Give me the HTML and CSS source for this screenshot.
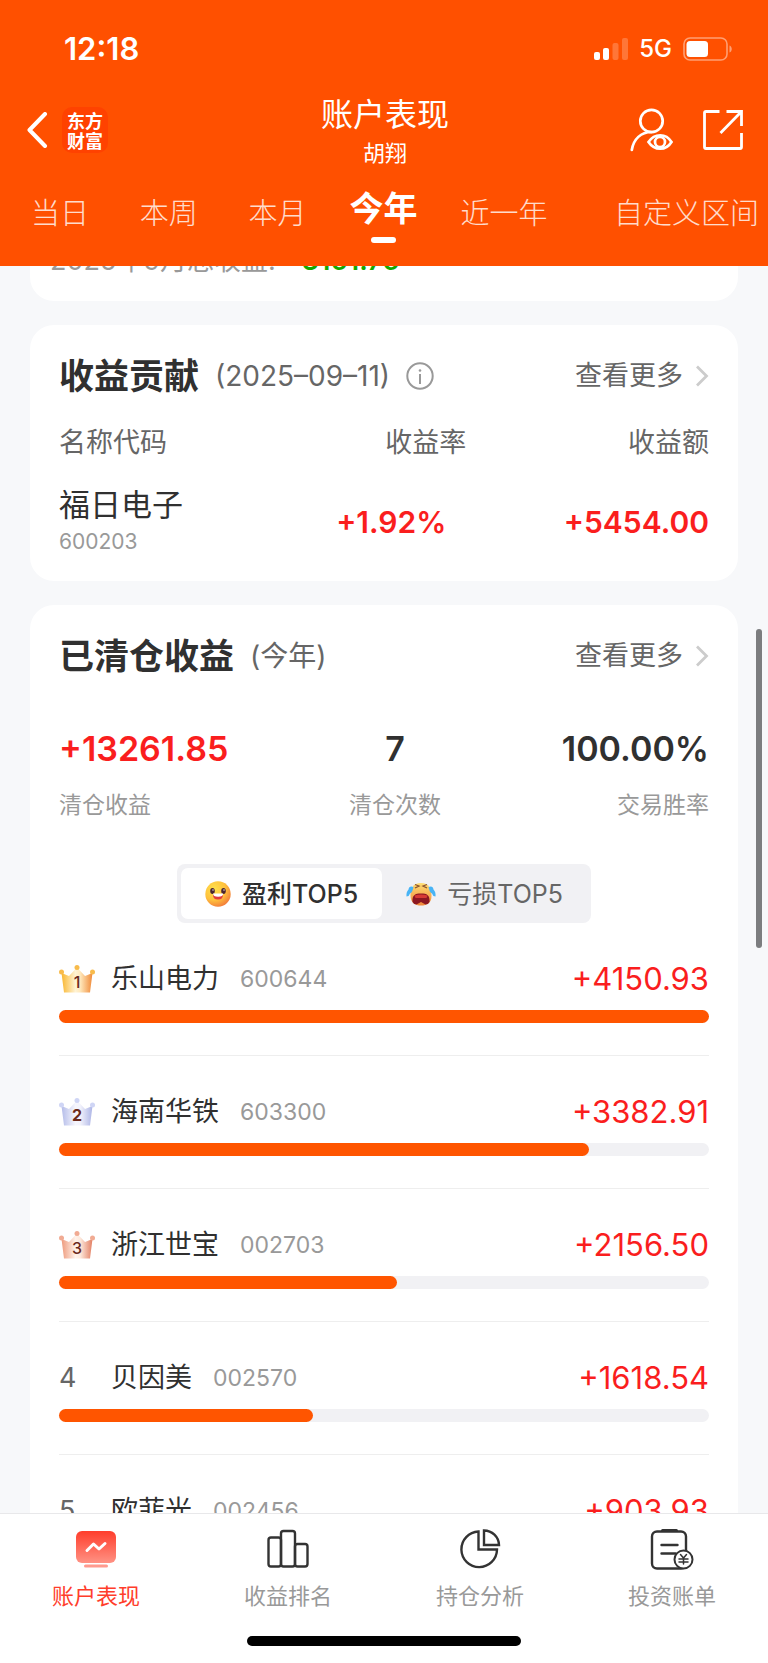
FILE: index.html
```html
<!DOCTYPE html>
<html lang="zh-CN">

<head>
  <meta charset="UTF-8" />
  <meta name="viewport" content="width=device-width, initial-scale=1" />
  <title>账户表现</title>
  <link rel="stylesheet" href="styles.css">
</head>

<body>
  <header class="app-header">
    <div class="status-bar">
      <span class="status-time">12:18</span>
      <div class="status-icons">
        <svg width="34" height="23" viewBox="0 0 34 23" fill="#fff" aria-hidden="true">
          <rect x="0" y="14" width="6" height="8" rx="2" />
          <rect x="9" y="10" width="6" height="12" rx="2" />
          <rect x="18.500" y="5" width="6" height="17" rx="2" opacity=".22" />
          <rect x="28" y="0" width="6" height="22" rx="2" opacity=".22" />
        </svg>
        <span class="status-net">5G</span>
        <svg width="50" height="24" viewBox="0 0 50 24" fill="none" aria-hidden="true">
          <rect x="1" y="1" width="43" height="22" rx="6" stroke="#fff" stroke-opacity=".45" stroke-width="1.600" />
          <rect x="3.500" y="4" width="21.500" height="16" rx="3.500" fill="#fff" />
          <path d="M46.500 8.500c3 1 3 6 0 7z" fill="#fff" fill-opacity=".45" />
        </svg>
      </div>
    </div>

    <div class="title-bar">
      <div class="bar-end">
        <button type="button" class="icon-button" aria-label="返回">
          <svg width="22" height="36" viewBox="0 0 22 36" fill="none" stroke="#fff" stroke-width="4">
            <path d="M19 2 3.500 18 19 34" stroke-linejoin="round" stroke-linecap="round" />
          </svg>
        </button>
        <span class="logo">东方<br>财富</span>
      </div>
      <div class="title-group">
        <h1>账户表现</h1>
        <p class="account-name">胡翔</p>
      </div>
      <div class="bar-end bar-end-right">
        <button type="button" class="icon-button" aria-label="查看账户">
          <svg width="44" height="44" viewBox="0 0 44 44" fill="none" stroke="#fff" stroke-width="2.700">
            <circle cx="22.500" cy="13" r="11.200" />
            <path d="M2.800 42C4.500 31 12 24 22.500 24" stroke-linecap="round" />
            <path d="M19.500 34c6-9 17.500-9 23 0-5.500 9-17 9-23 0z" fill="#ff5000" />
            <circle cx="31" cy="34" r="5" />
          </svg>
        </button>
        <button type="button" class="icon-button" aria-label="分享">
          <svg width="42" height="42" viewBox="0 0 42 42" fill="none" stroke="#fff" stroke-width="2.800">
            <path d="M17.500 2.500H4Q2.500 2.500 2.500 4v34Q2.500 39.500 4 39.500h34Q39.500 39.500 39.500 38V24" />
            <path d="M24.500 2.500h15V17M39 3 18.500 24" />
          </svg>
        </button>
      </div>
    </div>

    <nav class="period-tabs" aria-label="时间区间">
      <div class="tab-group">
        <button type="button" class="tab">当日</button>
        <button type="button" class="tab">本周</button>
        <button type="button" class="tab">本月</button>
      </div>
      <button type="button" class="tab tab-active">今年</button>
      <div class="tab-group">
        <button type="button" class="tab">近一年</button>
        <button type="button" class="tab">自定义区间</button>
      </div>
    </nav>
  </header>

  <main class="content">
    <section class="card card-summary">
      <span class="summary-label">2025年9月总收益:</span>
      <span class="summary-value">-3161.76</span>
    </section>

    <section class="card card-contribution">
      <div class="card-head">
        <h2>收益贡献</h2>
        <span class="card-note">(2025–09–11)</span>
        <button type="button" class="icon-button" aria-label="说明">
          <svg width="28" height="28" viewBox="0 0 28 28" fill="none" stroke="#999" stroke-width="2">
            <circle cx="14" cy="14" r="12.700" />
            <path d="M14 12v10" />
            <circle cx="14" cy="8.500" r="1.300" fill="#999" stroke="none" />
          </svg>
        </button>
        <a href="#" class="more-link">查看更多
          <svg width="14" height="22" viewBox="0 0 14 22" fill="none" stroke="#ccc" stroke-width="2.800">
            <path d="M2 1.500 11.500 11 2 20.500" />
          </svg>
        </a>
      </div>
      <table class="contribution-table">
        <thead>
          <tr>
            <th>名称代码</th>
            <th>收益率</th>
            <th>收益额</th>
          </tr>
        </thead>
        <tbody>
          <tr>
            <td><span class="stock-name">福日电子</span><span class="stock-code">600203</span></td>
            <td>+1.92%</td>
            <td>+5454.00</td>
          </tr>
        </tbody>
      </table>
    </section>

    <section class="card card-closed">
      <div class="card-head">
        <h2>已清仓收益</h2>
        <span class="card-note">(今年)</span>
        <a href="#" class="more-link">查看更多
          <svg width="14" height="22" viewBox="0 0 14 22" fill="none" stroke="#ccc" stroke-width="2.800">
            <path d="M2 1.500 11.500 11 2 20.500" />
          </svg>
        </a>
      </div>

      <div class="stats">
        <div class="stat">
          <strong class="stat-value up">+13261.85</strong>
          <span class="stat-label">清仓收益</span>
        </div>
        <div class="stat stat-center">
          <strong class="stat-value">7</strong>
          <span class="stat-label">清仓次数</span>
        </div>
        <div class="stat stat-right">
          <strong class="stat-value">100.00%</strong>
          <span class="stat-label">交易胜率</span>
        </div>
      </div>

      <div class="toggle">
        <button type="button" class="toggle-option toggle-active">
          <svg width="26" height="26" viewBox="0 0 26 26" aria-hidden="true">
            <defs>
              <radialGradient id="smile" cx=".35" cy=".3" r=".8">
                <stop offset="0" stop-color="#ffe04a" />
                <stop offset=".55" stop-color="#ffc13c" />
                <stop offset="1" stop-color="#f0703a" />
              </radialGradient>
            </defs>
            <circle cx="13" cy="13" r="12.700" fill="url(#smile)" />
            <ellipse cx="7.500" cy="10" rx="2.300" ry="2.900" fill="#4a2530" />
            <ellipse cx="18.500" cy="10" rx="2.300" ry="2.900" fill="#4a2530" />
            <circle cx="8" cy="9" r=".7" fill="#fff" />
            <circle cx="19" cy="9" r=".7" fill="#fff" />
            <path d="M8 13h10q.5 5.500-5 5.500T8 13z" fill="#e23b3b" />
            <path d="M8 12.500h10.200q0 3.300-5.100 3.300T8 12.500z" fill="#fff" />
          </svg>
          盈利TOP5
        </button>
        <button type="button" class="toggle-option">
          <svg width="30" height="26" viewBox="0 0 30 26" aria-hidden="true">
            <defs>
              <linearGradient id="cry" x1="0" y1="0" x2="0" y2="1">
                <stop offset="0" stop-color="#ffdf72" />
                <stop offset="1" stop-color="#f0873a" />
              </linearGradient>
            </defs>
            <path d="M15 2C7 2 4 8 4.500 15S9 24.500 15 24.500 25.500 22 25.500 15 23 2 15 2z" fill="url(#cry)" />
            <path d="M9 3.500l4 1.500-4 2M21 3.500 17 5l4 2" fill="none" stroke="#8a5230" stroke-width="1.300" />
            <path d="M6.500 21C6 14 9 12.500 15 12.500s9 1.500 8.500 8.500q-1.500 2.500-4 2.500L15 21l-4.500 2.500Q8 23.500 6.500 21z" fill="#8c1822" />
            <path d="M8.500 14.500q6.500-2 13 0l-1 2.500h-11z" fill="#d63a35" />
            <path d="M7.500 6Q3 4.500 2.500 8.500 0 11 .5 15.500q3-.5 3.500-3 2.500-1 3.500-6.500zM22.500 6q4.500-1.500 5 2.500 2.500 2.500 2 7-3-.5-3.500-3-2.500-1-3.500-6.500z" fill="#48b4f5" />
          </svg>
          亏损TOP5
        </button>
      </div>

      <ol class="rank-list">
        <li class="rank-item">
          <div class="rank-row">
            <svg class="crown" viewBox="0 0 36 28">
              <defs>
                <linearGradient id="gold">
                  <stop offset="0" stop-color="#f9b62f" />
                  <stop offset=".45" stop-color="#fff3d4" />
                  <stop offset=".6" stop-color="#ffe9bd" />
                  <stop offset="1" stop-color="#f08a38" />
                </linearGradient>
              </defs>
              <path d="M2.500 8 10 11 18 2.500 26 11 33.500 8 31 27.500H5z" fill="url(#gold)" />
              <g fill="#f8bb4c">
                <circle cx="2.500" cy="7" r="2.500" />
                <circle cx="18" cy="2.500" r="2.500" />
                <circle cx="33.500" cy="7" r="2.500" />
              </g>
              <text x="18" y="23" text-anchor="middle">1</text>
            </svg>
            <span class="rank-name">乐山电力</span>
            <span class="rank-code">600644</span>
            <span class="rank-amount">+4150.93</span>
          </div>
          <div class="bar"><div class="bar-fill" style="width: 100%"></div></div>
        </li>
        <li class="rank-item">
          <div class="rank-row">
            <svg class="crown" viewBox="0 0 36 28">
              <defs>
                <linearGradient id="silver">
                  <stop offset="0" stop-color="#b4bce9" />
                  <stop offset=".45" stop-color="#f6f6fd" />
                  <stop offset=".6" stop-color="#f3f3fc" />
                  <stop offset="1" stop-color="#adb5e6" />
                </linearGradient>
              </defs>
              <path d="M2.500 8 10 11 18 2.500 26 11 33.500 8 31 27.500H5z" fill="url(#silver)" />
              <g fill="#cfd5f5">
                <circle cx="2.500" cy="7" r="2.500" />
                <circle cx="18" cy="2.500" r="2.500" />
                <circle cx="33.500" cy="7" r="2.500" />
              </g>
              <text class="crown-bold" x="18" y="23" text-anchor="middle">2</text>
            </svg>
            <span class="rank-name">海南华铁</span>
            <span class="rank-code">603300</span>
            <span class="rank-amount">+3382.91</span>
          </div>
          <div class="bar"><div class="bar-fill" style="width: 81.6%"></div></div>
        </li>
        <li class="rank-item">
          <div class="rank-row">
            <svg class="crown" viewBox="0 0 36 28">
              <defs>
                <linearGradient id="bronze">
                  <stop offset="0" stop-color="#ee9a7c" />
                  <stop offset=".45" stop-color="#fff2ea" />
                  <stop offset=".6" stop-color="#fdeade" />
                  <stop offset="1" stop-color="#e37f63" />
                </linearGradient>
              </defs>
              <path d="M2.500 8 10 11 18 2.500 26 11 33.500 8 31 27.500H5z" fill="url(#bronze)" />
              <g fill="#f1ab93">
                <circle cx="2.500" cy="7" r="2.500" />
                <circle cx="18" cy="2.500" r="2.500" />
                <circle cx="33.500" cy="7" r="2.500" />
              </g>
              <text x="18" y="23" text-anchor="middle">3</text>
            </svg>
            <span class="rank-name">浙江世宝</span>
            <span class="rank-code">002703</span>
            <span class="rank-amount">+2156.50</span>
          </div>
          <div class="bar"><div class="bar-fill" style="width: 52%"></div></div>
        </li>
        <li class="rank-item">
          <div class="rank-row">
            <span class="rank-number">4</span>
            <span class="rank-name">贝因美</span>
            <span class="rank-code">002570</span>
            <span class="rank-amount">+1618.54</span>
          </div>
          <div class="bar"><div class="bar-fill" style="width: 39%"></div></div>
        </li>
        <li class="rank-item">
          <div class="rank-row">
            <span class="rank-number">5</span>
            <span class="rank-name">欧菲光</span>
            <span class="rank-code">002456</span>
            <span class="rank-amount">+903.93</span>
          </div>
          <div class="bar"><div class="bar-fill" style="width: 21.8%"></div></div>
        </li>
      </ol>
    </section>

    <div class="scroll-thumb"></div>
  </main>

  <footer class="app-footer">
    <nav class="bottom-nav" aria-label="主导航">
      <a href="#" class="nav-item nav-active">
        <svg width="44" height="44" viewBox="0 0 44 44" fill="none">
          <defs>
            <linearGradient id="screen" x1="0" y1="0" x2="0" y2="1">
              <stop offset="0" stop-color="#ff3d2b" />
              <stop offset="1" stop-color="#ff9284" />
            </linearGradient>
          </defs>
          <rect x="2" y="3" width="40" height="32" rx="6" fill="url(#screen)" />
          <path d="M13 22.500 19.500 16l5.500 5 6-5.500" stroke="#fff" stroke-width="3" stroke-linecap="round" stroke-linejoin="round" />
          <path d="M11.500 38h21" stroke="#ff9a8e" stroke-width="3" stroke-linecap="round" />
        </svg>
        账户表现
      </a>
      <a href="#" class="nav-item">
        <svg width="44" height="44" viewBox="0 0 44 44" fill="none" stroke="#333" stroke-width="2.400">
          <rect x="2.500" y="9.500" width="12.500" height="29" rx="2.500" />
          <rect x="15" y="3" width="14" height="35.500" rx="2.500" />
          <rect x="29" y="16" width="12.500" height="22.500" rx="2.500" />
        </svg>
        收益排名
      </a>
      <a href="#" class="nav-item">
        <svg width="44" height="44" viewBox="0 0 44 44" fill="none" stroke="#333" stroke-width="2.400">
          <path d="M20.500 3.500A17.800 17.800 0 1 0 39 21.500H20.500z" />
          <path d="M26 2.500A15 15 0 0 1 41 17H26z" />
        </svg>
        持仓分析
      </a>
      <a href="#" class="nav-item">
        <svg width="44" height="44" viewBox="0 0 44 44" fill="none" stroke="#333" stroke-width="2.400" stroke-linecap="round">
          <rect x="2" y="3.500" width="34" height="37" rx="5" />
          <path d="M12.500 2.500h14" stroke-width="3" />
          <path d="M11.500 17h16M11.500 25.500h14" />
          <circle cx="33.500" cy="31.500" r="9" fill="#fff" stroke-width="2" />
          <path d="M30.500 26.500l3 3.500 3-3.500M33.500 30v6M29 31h9M29 34h9" stroke-width="1.500" />
        </svg>
        投资账单
      </a>
    </nav>
    <div class="home-indicator"></div>
  </footer>
</body>

</html>
```
FILE: styles.css
```css
:root {
  --color-brand: #ff5000;
  --color-bar: #ff5500;
  --color-up: #fa1e1e;
  --color-down: #14a800;
  --color-text: #303030;
  --color-text-secondary: #666;
  --color-text-muted: #999;
  --color-bg: #f7f8fa;
  --color-track: #f1f1f4;
  --font-family: Inter, 'Noto Sans CJK SC', sans-serif;
}

*,
*::before,
*::after {
  box-sizing: border-box;
}

body {
  margin: 0;
  height: 100vh;
  display: flex;
  flex-direction: column;
  overflow: hidden;
  background: var(--color-bg);
  color: var(--color-text);
  font-family: var(--font-family);
  font-size: 27px;
  line-height: 40px;
}

h1,
h2,
p {
  margin: 0;
}

button {
  border: none;
  background: none;
  padding: 0;
  color: inherit;
  font: inherit;
  cursor: pointer;
}

a {
  color: inherit;
  text-decoration: none;
}

svg {
  display: block;
  flex: none;
}

/* Header */
.app-header {
  flex: none;
  background: var(--color-brand);
  color: #fff;
}

.status-bar {
  display: flex;
  align-items: center;
  justify-content: space-between;
  height: 92px;
  padding: 6px 35px 0 64px;
}

.status-time {
  font-size: 31px;
  font-weight: 600;
}

.status-icons {
  display: flex;
  align-items: center;
  gap: 11px;
}

.status-net {
  font-size: 24px;
  font-weight: 500;
}

.title-bar {
  display: grid;
  grid-template-columns: minmax(0, 1fr) auto minmax(0, 1fr);
  align-items: center;
  padding: 0 24px 0 26px;
}

.bar-end {
  display: flex;
  align-items: center;
  gap: 14px;
}

.bar-end-right {
  justify-content: flex-end;
  gap: 29px;
}

.logo {
  padding: 3px 5px;
  border-radius: 10px;
  background: #ff4200;
  font-family: 'Noto Sans CJK SC', sans-serif;
  font-size: 18px;
  font-weight: 700;
  line-height: 20px;
}

.title-group {
  text-align: center;
}

h1 {
  font-size: 32px;
  font-weight: 400;
  line-height: 46px;
}

.account-name {
  font-size: 22px;
  line-height: 30px;
}

.period-tabs {
  display: grid;
  grid-template-columns: minmax(0, 12fr) auto minmax(0, 13fr);
  align-items: end;
  column-gap: 43px;
  height: 98px;
  padding: 0 9px 23px 31px;
}

.tab-group {
  display: flex;
  justify-content: space-between;
  padding-bottom: 9px;
}

.tab {
  font-size: 29px;
  font-weight: 300;
  white-space: nowrap;
  opacity: .8;
}

.tab-active {
  display: flex;
  flex-direction: column;
  align-items: center;
  gap: 8px;
  font-size: 34px;
  font-weight: 700;
  opacity: 1;
}

.tab-active::after {
  content: "";
  width: 25px;
  height: 6px;
  border-radius: 3px;
  background: #fff;
}

/* Cards */
.content {
  position: relative;
  flex: 1;
  min-height: 0;
  display: flex;
  flex-direction: column;
  gap: 24px;
  padding: 0 30px;
  overflow: hidden;
}

.card {
  flex: none;
  padding: 31px 29px 24px;
  border-radius: 24px;
  background: #fff;
}

/* The first card sits partly scrolled under the header */
.card-summary {
  margin-top: -25px;
  padding: 0 20px;
  padding-bottom: 20px;
}

.summary-label {
  color: var(--color-text-muted);
}

.summary-value {
  margin-left: 6px;
  color: var(--color-down);
  font-weight: 600;
}

.card-contribution {
  padding-bottom: 22px;
}

.card-head {
  display: flex;
  align-items: center;
  gap: 16px;
}

h2 {
  font-size: 35px;
  font-weight: 700;
}

.card-note {
  color: var(--color-text-secondary);
  font-size: 28px;
}

.more-link {
  display: flex;
  align-items: center;
  gap: 12px;
  margin-left: auto;
  color: var(--color-text-secondary);
}

.contribution-table {
  width: 100%;
  margin-top: 27px;
  border-collapse: collapse;
  table-layout: fixed;
}

.contribution-table th {
  padding: 0;
  color: var(--color-text-secondary);
  font-weight: 400;
  text-align: right;
}

.contribution-table th:nth-child(2) {
  padding-right: 26px;
}

.contribution-table th:first-child,
.contribution-table td:first-child {
  text-align: left;
}

.contribution-table td {
  padding: 22px 0 0;
  color: var(--color-up);
  font-size: 30px;
  font-weight: 600;
  text-align: right;
}

.contribution-table td:nth-child(2) {
  padding-right: 46px;
}

.stock-name,
.stock-code {
  display: block;
  font-weight: 400;
}

.stock-name {
  color: var(--color-text);
  font-size: 31px;
}

.stock-code {
  color: var(--color-text-muted);
  font-size: 21px;
  line-height: 34px;
}

/* Closed positions */
.stats {
  display: flex;
  justify-content: space-between;
  margin-top: 53px;
}

.stat {
  display: flex;
  flex-direction: column;
  gap: 16px;
}

.stat-center {
  align-items: center;
}

.stat-right {
  align-items: flex-end;
}

.stat-value {
  font-size: 34px;
  font-weight: 600;
}

.stat-label {
  color: var(--color-text-muted);
  font-size: 23px;
}

.up {
  color: var(--color-up);
}

.toggle {
  display: flex;
  width: fit-content;
  margin: 39px auto 0;
  padding: 4px;
  border-radius: 8px;
  background: var(--color-track);
}

.toggle-option {
  display: flex;
  align-items: center;
  gap: 11px;
  height: 51px;
  padding: 0 24px;
  border-radius: 7px;
  color: var(--color-text-secondary);
  font-size: 25px;
}

.toggle-active {
  background: #fff;
  color: var(--color-text);
  font-weight: 500;
}

.rank-list {
  margin: 0;
  padding: 0;
  list-style: none;
}

.rank-item {
  padding: 36px 0 32px;
  border-bottom: 1px solid #eee;
}

.rank-row {
  display: flex;
  align-items: center;
  margin-bottom: 11px;
}

.crown,
.rank-number {
  width: 36px;
  margin-right: 16px;
}

.crown text {
  fill: #6b2a1c;
  font-size: 16px;
  font-weight: 500;
}

.crown .crown-bold {
  font-weight: 700;
}

.rank-number {
  color: var(--color-text-secondary);
}

.rank-code {
  margin-left: 21px;
  color: var(--color-text-muted);
  font-size: 23px;
}

.rank-amount {
  margin-left: auto;
  color: var(--color-up);
  font-size: 31px;
}

.bar {
  height: 13px;
  border-radius: 7px;
  background: var(--color-track);
}

.bar-fill {
  height: 100%;
  border-radius: 7px;
  background: var(--color-bar);
}

.scroll-thumb {
  position: absolute;
  top: 363px;
  right: 6px;
  width: 6px;
  height: 319px;
  border-radius: 3px;
  background: #7c7d7f;
}

/* Bottom navigation */
.app-footer {
  flex: none;
  border-top: 1px solid #e8e8ea;
  background: #fff;
}

.bottom-nav {
  display: grid;
  grid-template-columns: repeat(4, 1fr);
  padding-top: 14px;
}

.nav-item {
  display: flex;
  flex-direction: column;
  align-items: center;
  gap: 4px;
  color: var(--color-text-muted);
  font-size: 22px;
}

.nav-active {
  color: #ff3d2b;
}

.home-indicator {
  width: 274px;
  height: 10px;
  margin: 20px auto 17px;
  border-radius: 5px;
  background: #000;
}
```
